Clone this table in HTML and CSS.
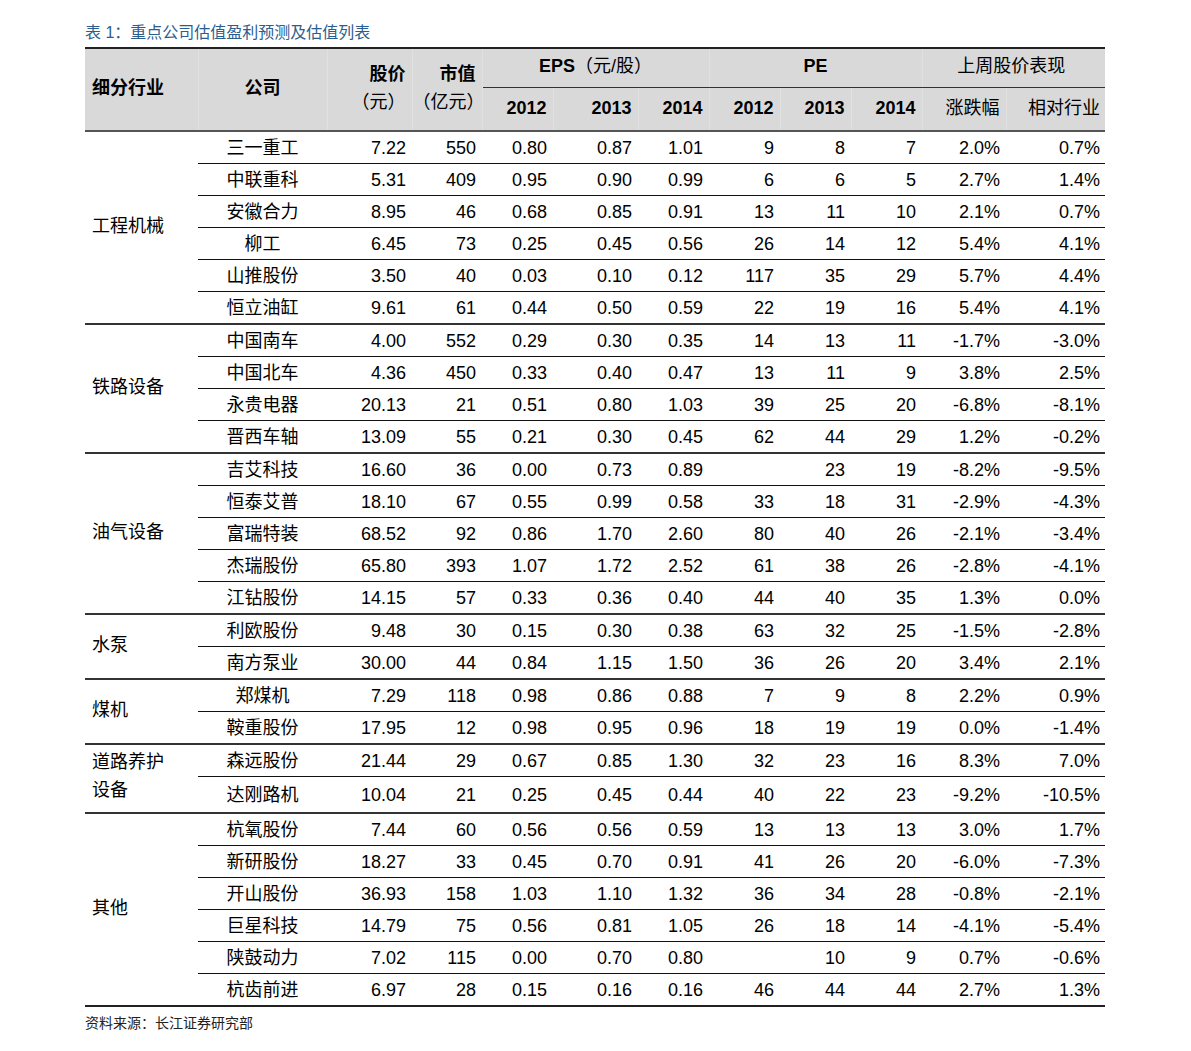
FILE: index.html
```html
<!DOCTYPE html>
<html lang="zh-CN">
<head>
<meta charset="utf-8">
<title>重点公司估值盈利预测及估值列表</title>
<link rel="stylesheet" href="styles.css">
</head>
<body>
<div class="page">
  <div class="caption">表 1：重点公司估值盈利预测及估值列表</div>
  <table class="data">
    <colgroup>
      <col class="c-ind"><col class="c-co"><col class="c-px"><col class="c-mv">
      <col class="c-e1"><col class="c-e2"><col class="c-e3">
      <col class="c-p1"><col class="c-p2"><col class="c-p3">
      <col class="c-chg"><col class="c-rel">
    </colgroup>
    <thead>
      <tr class="h1">
        <th rowspan="2" class="l">细分行业</th>
        <th rowspan="2" class="c">公司</th>
        <th rowspan="2" class="r two">股价<br><span class="reg">（元）</span></th>
        <th rowspan="2" class="r two">市值<br><span class="reg">（亿元）</span></th>
        <th colspan="3" class="c grp">EPS<span class="reg">（元/股）</span></th>
        <th colspan="3" class="c grp">PE</th>
        <th colspan="2" class="c grp reg">上周股价表现</th>
      </tr>
      <tr class="h2">
        <th class="r">2012</th><th class="r">2013</th><th class="r">2014</th>
        <th class="r">2012</th><th class="r">2013</th><th class="r">2014</th>
        <th class="r reg">涨跌幅</th><th class="r reg">相对行业</th>
      </tr>
    </thead>
    <tbody class="g">
      <tr><td rowspan="6" class="ind">工程机械</td><td class="co">三一重工</td><td>7.22</td><td>550</td><td>0.80</td><td>0.87</td><td>1.01</td><td>9</td><td>8</td><td>7</td><td>2.0%</td><td>0.7%</td></tr>
      <tr><td class="co">中联重科</td><td>5.31</td><td>409</td><td>0.95</td><td>0.90</td><td>0.99</td><td>6</td><td>6</td><td>5</td><td>2.7%</td><td>1.4%</td></tr>
      <tr><td class="co">安徽合力</td><td>8.95</td><td>46</td><td>0.68</td><td>0.85</td><td>0.91</td><td>13</td><td>11</td><td>10</td><td>2.1%</td><td>0.7%</td></tr>
      <tr><td class="co">柳工</td><td>6.45</td><td>73</td><td>0.25</td><td>0.45</td><td>0.56</td><td>26</td><td>14</td><td>12</td><td>5.4%</td><td>4.1%</td></tr>
      <tr><td class="co">山推股份</td><td>3.50</td><td>40</td><td>0.03</td><td>0.10</td><td>0.12</td><td>117</td><td>35</td><td>29</td><td>5.7%</td><td>4.4%</td></tr>
      <tr><td class="co">恒立油缸</td><td>9.61</td><td>61</td><td>0.44</td><td>0.50</td><td>0.59</td><td>22</td><td>19</td><td>16</td><td>5.4%</td><td>4.1%</td></tr>
    </tbody>
    <tbody class="g">
      <tr><td rowspan="4" class="ind">铁路设备</td><td class="co">中国南车</td><td>4.00</td><td>552</td><td>0.29</td><td>0.30</td><td>0.35</td><td>14</td><td>13</td><td>11</td><td>-1.7%</td><td>-3.0%</td></tr>
      <tr><td class="co">中国北车</td><td>4.36</td><td>450</td><td>0.33</td><td>0.40</td><td>0.47</td><td>13</td><td>11</td><td>9</td><td>3.8%</td><td>2.5%</td></tr>
      <tr><td class="co">永贵电器</td><td>20.13</td><td>21</td><td>0.51</td><td>0.80</td><td>1.03</td><td>39</td><td>25</td><td>20</td><td>-6.8%</td><td>-8.1%</td></tr>
      <tr><td class="co">晋西车轴</td><td>13.09</td><td>55</td><td>0.21</td><td>0.30</td><td>0.45</td><td>62</td><td>44</td><td>29</td><td>1.2%</td><td>-0.2%</td></tr>
    </tbody>
    <tbody class="g">
      <tr><td rowspan="5" class="ind">油气设备</td><td class="co">吉艾科技</td><td>16.60</td><td>36</td><td>0.00</td><td>0.73</td><td>0.89</td><td></td><td>23</td><td>19</td><td>-8.2%</td><td>-9.5%</td></tr>
      <tr><td class="co">恒泰艾普</td><td>18.10</td><td>67</td><td>0.55</td><td>0.99</td><td>0.58</td><td>33</td><td>18</td><td>31</td><td>-2.9%</td><td>-4.3%</td></tr>
      <tr><td class="co">富瑞特装</td><td>68.52</td><td>92</td><td>0.86</td><td>1.70</td><td>2.60</td><td>80</td><td>40</td><td>26</td><td>-2.1%</td><td>-3.4%</td></tr>
      <tr><td class="co">杰瑞股份</td><td>65.80</td><td>393</td><td>1.07</td><td>1.72</td><td>2.52</td><td>61</td><td>38</td><td>26</td><td>-2.8%</td><td>-4.1%</td></tr>
      <tr><td class="co">江钻股份</td><td>14.15</td><td>57</td><td>0.33</td><td>0.36</td><td>0.40</td><td>44</td><td>40</td><td>35</td><td>1.3%</td><td>0.0%</td></tr>
    </tbody>
    <tbody class="g">
      <tr><td rowspan="2" class="ind">水泵</td><td class="co">利欧股份</td><td>9.48</td><td>30</td><td>0.15</td><td>0.30</td><td>0.38</td><td>63</td><td>32</td><td>25</td><td>-1.5%</td><td>-2.8%</td></tr>
      <tr><td class="co">南方泵业</td><td>30.00</td><td>44</td><td>0.84</td><td>1.15</td><td>1.50</td><td>36</td><td>26</td><td>20</td><td>3.4%</td><td>2.1%</td></tr>
    </tbody>
    <tbody class="g">
      <tr><td rowspan="2" class="ind">煤机</td><td class="co">郑煤机</td><td>7.29</td><td>118</td><td>0.98</td><td>0.86</td><td>0.88</td><td>7</td><td>9</td><td>8</td><td>2.2%</td><td>0.9%</td></tr>
      <tr><td class="co">鞍重股份</td><td>17.95</td><td>12</td><td>0.98</td><td>0.95</td><td>0.96</td><td>18</td><td>19</td><td>19</td><td>0.0%</td><td>-1.4%</td></tr>
    </tbody>
    <tbody class="g">
      <tr><td rowspan="2" class="ind ind2">道路养护<br>设备</td><td class="co">森远股份</td><td>21.44</td><td>29</td><td>0.67</td><td>0.85</td><td>1.30</td><td>32</td><td>23</td><td>16</td><td>8.3%</td><td>7.0%</td></tr>
      <tr class="tall"><td class="co">达刚路机</td><td>10.04</td><td>21</td><td>0.25</td><td>0.45</td><td>0.44</td><td>40</td><td>22</td><td>23</td><td>-9.2%</td><td>-10.5%</td></tr>
    </tbody>
    <tbody class="g last">
      <tr><td rowspan="6" class="ind">其他</td><td class="co">杭氧股份</td><td>7.44</td><td>60</td><td>0.56</td><td>0.56</td><td>0.59</td><td>13</td><td>13</td><td>13</td><td>3.0%</td><td>1.7%</td></tr>
      <tr><td class="co">新研股份</td><td>18.27</td><td>33</td><td>0.45</td><td>0.70</td><td>0.91</td><td>41</td><td>26</td><td>20</td><td>-6.0%</td><td>-7.3%</td></tr>
      <tr><td class="co">开山股份</td><td>36.93</td><td>158</td><td>1.03</td><td>1.10</td><td>1.32</td><td>36</td><td>34</td><td>28</td><td>-0.8%</td><td>-2.1%</td></tr>
      <tr><td class="co">巨星科技</td><td>14.79</td><td>75</td><td>0.56</td><td>0.81</td><td>1.05</td><td>26</td><td>18</td><td>14</td><td>-4.1%</td><td>-5.4%</td></tr>
      <tr><td class="co">陕鼓动力</td><td>7.02</td><td>115</td><td>0.00</td><td>0.70</td><td>0.80</td><td></td><td>10</td><td>9</td><td>0.7%</td><td>-0.6%</td></tr>
      <tr><td class="co">杭齿前进</td><td>6.97</td><td>28</td><td>0.15</td><td>0.16</td><td>0.16</td><td>46</td><td>44</td><td>44</td><td>2.7%</td><td>1.3%</td></tr>
    </tbody>
  </table>
  <div class="source">资料来源：长江证券研究部</div>
</div>
</body>
</html>
```

FILE: styles.css
```css
html, body {
  margin: 0;
  padding: 0;
  background: #ffffff;
}

.page {
  padding: 23px 86px 0 85px;
  font-family: "Liberation Sans", "Noto Sans CJK SC", sans-serif;
  color: #000;
}

.caption {
  font-size: 16px;
  line-height: 20px;
  color: #2c5d8f;
  height: 24px;
}

.data {
  width: 1020px;
  table-layout: fixed;
  border-collapse: collapse;
  font-size: 18px;
}

.c-ind { width: 113px; }
.c-co { width: 129px; }
.c-px { width: 85px; }
.c-mv { width: 70px; }
.c-e1 { width: 71px; }
.c-e2 { width: 85px; }
.c-e3 { width: 71px; }
.c-p1 { width: 71px; }
.c-p2 { width: 71px; }
.c-p3 { width: 71px; }
.c-chg { width: 84px; }
.c-rel { width: 99px; }

.data thead th {
  background: #d9d9d9;
  font-weight: bold;
  padding: 0 6px 3px 0;
  line-height: 28px;
  border-right: 1px solid #e1e1e1;
}

.data thead .reg {
  font-weight: normal;
}

.data thead th:last-child,
.data thead .h2 th:last-child {
  border-right: none;
  padding-right: 5px;
}

.data thead .h1 th {
  border-top: 2px solid #222;
  height: 38px;
}

.data thead .h2 th {
  height: 39px;
  border-bottom: 2px solid #555;
}

.data thead .h1 th[rowspan] {
  border-bottom: 2px solid #555;
}

.data thead .grp {
  border-bottom: 1px solid #333;
  padding: 0;
  vertical-align: top;
  line-height: 35px;
}

.data th.l { text-align: left; padding-left: 7px; }
.data th.c { text-align: center; padding-left: 0; padding-right: 0; }
.data th.r { text-align: right; }

.data tbody td {
  height: 31px;
  padding: 0 6px 0 0;
  text-align: right;
  line-height: 20px;
  border-top: 1px solid #111;
  white-space: nowrap;
}

.data tbody td:last-child {
  padding-right: 5px;
}

.data tbody tr:first-child td {
  border-top: none;
}

.data tbody.g {
  border-top: 2px solid #333;
}

.data thead + tbody.g {
  border-top: none;
}

.data tbody.last {
  border-bottom: 2px solid #222;
}

.data tbody td.co {
  text-align: center;
  padding: 0;
}

.data tbody td.ind {
  text-align: left;
  padding: 0 0 4px 7px;
  vertical-align: middle;
}

.data tbody td.ind2 {
  line-height: 28px;
  padding-bottom: 6px;
}

.data tbody tr.tall td {
  height: 35px;
}

.source {
  margin-top: 7px;
  font-size: 14px;
  line-height: 18px;
  color: #222;
}
```
